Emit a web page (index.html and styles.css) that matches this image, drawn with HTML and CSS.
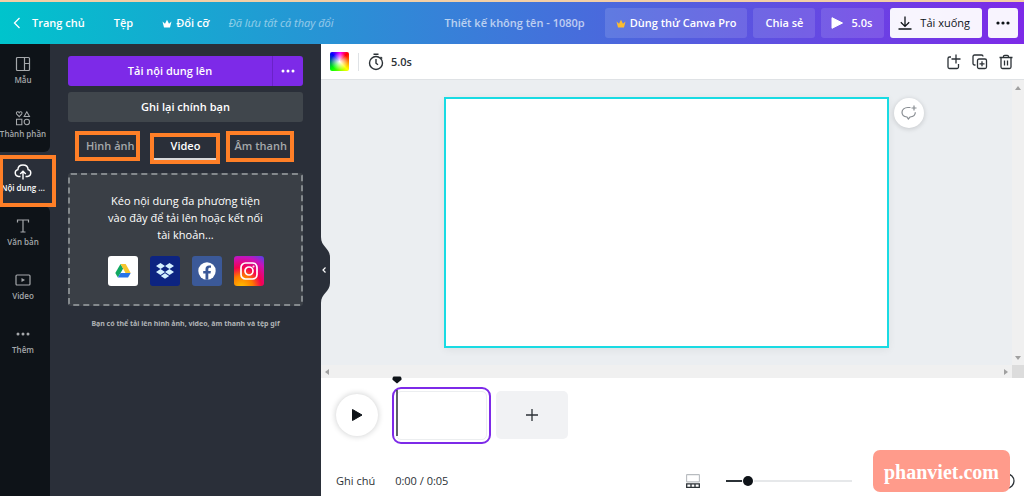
FILE: index.html
```html
<!DOCTYPE html>
<html lang="vi">
<head>
<meta charset="utf-8">
<meta name="viewport" content="width=device-width, initial-scale=1">
<title>Thiết kế không tên - 1080p</title>
<link rel="stylesheet" href="styles.css">
</head>
<body>
<header class="topbar">
  <nav class="topnav">
    <a class="home" href="#"><svg width="8" height="12" viewBox="0 0 8 12"><path d="M6.500 1 1.500 6l5 5" fill="none" stroke="currentColor" stroke-width="1.300"/></svg>Trang chủ</a>
    <button class="navbtn" type="button">Tệp</button>
    <button class="navbtn resize" type="button"><svg width="10" height="9" viewBox="0 0 10 9"><path d="M2 8.500 .5 2.500l2.500 2.200L5 .8l2 3.900 2.500-2.200L8 8.500z" fill="currentColor"/></svg>Đổi cỡ</button>
    <span class="saved">Đã lưu tất cả thay đổi</span>
  </nav>
  <div class="actions">
    <span class="title">Thiết kế không tên - 1080p</span>
    <button class="btn pro" type="button"><svg class="gold" width="10" height="9" viewBox="0 0 10 9"><path d="M2 8.500 .5 2.500l2.500 2.200L5 .8l2 3.900 2.500-2.200L8 8.500z" fill="currentColor"/></svg>Dùng thử Canva Pro</button>
    <button class="btn" type="button">Chia sẻ</button>
    <button class="btn preview" type="button"><svg width="12" height="12" viewBox="0 0 12 12"><path d="M1 .7v10.600L11.500 6z" fill="currentColor" stroke="currentColor" stroke-linejoin="round"/></svg>5.0s</button>
    <button class="btn light download" type="button"><svg width="14" height="14" viewBox="0 0 14 14" fill="none" stroke="currentColor" stroke-width="1.300"><path d="M7 .5V10M2.800 6.200 7 10.400l4.200-4.200M.5 13h13"/></svg>Tải xuống</button>
    <button class="btn light more" type="button" aria-label="Thêm tùy chọn"><svg width="14" height="4" viewBox="0 0 14 4" fill="currentColor"><circle cx="2" cy="2" r="1.600"/><circle cx="7" cy="2" r="1.600"/><circle cx="12" cy="2" r="1.600"/></svg></button>
  </div>
</header>
<div class="workspace">
  <nav class="rail">
    <div class="group top">
      <a class="tab" href="#"><svg width="16" height="16" viewBox="0 0 16 16" fill="none" stroke="currentColor" stroke-width="1.200"><rect x="1.500" y="1.500" width="13" height="13" rx="1"/><path d="M9.500 1.500v13M9.500 7.500h5"/></svg>Mẫu</a>
      <a class="tab" href="#"><svg width="18" height="18" viewBox="0 0 18 18" fill="none" stroke="currentColor" stroke-width="1.200"><path d="M4.700 7.500 2 4.600C.5 2.500 3.400.7 4.700 3 6 .7 9 2.500 7.400 4.600zM13.300 2l3 5.400h-6zM1.700 10.500h6v6h-6z"/><circle cx="13.300" cy="13.500" r="3"/></svg>Thành phần</a>
    </div>
    <a class="tab active" href="#" aria-current="page"><svg width="18" height="16" viewBox="0 0 18 16" fill="none" stroke="currentColor" stroke-width="1.400"><path d="M6.500 12.500H4.500A3.500 3.500 0 0 1 3.900 5.600C4 2.800 6.200 1 9 1s5 1.800 5.100 4.600a3.500 3.500 0 0 1-.6 6.900h-2M9 15.500v-8M6.200 10 9 7.200l2.800 2.800"/></svg>Nội dung ...</a>
    <div class="group rest">
      <a class="tab" href="#"><svg width="14" height="16" viewBox="0 0 14 16" fill="none" stroke="currentColor" stroke-width="1.200"><path d="M1.500 4.500V2h11v2.500M7 2v12M4.500 14h5"/></svg>Văn bản</a>
      <a class="tab" href="#"><svg width="16" height="16" viewBox="0 0 16 16" fill="none" stroke="currentColor" stroke-width="1.200"><rect x="1" y="3" width="14" height="10" rx="1"/><path d="M6.500 6v4L10 8z" fill="currentColor" stroke="none"/></svg>Video</a>
      <a class="tab" href="#"><svg width="16" height="16" viewBox="0 0 16 16" fill="currentColor"><circle cx="3" cy="8" r="1.500"/><circle cx="8" cy="8" r="1.500"/><circle cx="13" cy="8" r="1.500"/></svg>Thêm</a>
    </div>
    <span class="mark mark-rail"></span>
  </nav>
  <aside class="panel">
    <div class="upload">
      <button class="upload-main" type="button">Tải nội dung lên</button>
      <button class="upload-more" type="button" aria-label="Tùy chọn tải lên"><svg width="14" height="4" viewBox="0 0 14 4" fill="currentColor"><circle cx="2" cy="2" r="1.500"/><circle cx="7" cy="2" r="1.500"/><circle cx="12" cy="2" r="1.500"/></svg></button>
    </div>
    <button class="record" type="button">Ghi lại chính bạn</button>
    <div class="kinds">
      <button class="kind" type="button">Hình ảnh<span class="mark mark-image"></span></button>
      <button class="kind selected" type="button">Video<span class="mark mark-video"></span></button>
      <button class="kind" type="button">Âm thanh<span class="mark mark-audio"></span></button>
    </div>
    <section class="drop">
      <p class="drop-text">Kéo nội dung đa phương tiện vào đây để tải lên hoặc kết nối tài khoản...</p>
      <div class="services">
        <button class="service drive" type="button" aria-label="Google Drive"><svg width="16" height="14" viewBox="0 0 16 14"><path d="M5.500 0 .3 9l2.600 4.500L8.200 4.600z" fill="#11a861"/><path d="M5.500 0h5.200l5 9h-5.200z" fill="#f7c52d"/><path d="M2.900 13.500 5.500 9h10.200l-2.600 4.500z" fill="#2874e8"/></svg></button>
        <button class="service dropbox" type="button" aria-label="Dropbox"><svg width="20" height="18" viewBox="0 0 20 18" fill="#d5f1ff"><path d="m5.500 1 4.500 3-4.500 3L1 4zM14.500 1 19 4l-4.500 3L10 4zM5.500 7l4.500 3-4.500 3L1 10zM14.500 7l4.500 3-4.500 3-4.500-3zM10 11.200l4.200 2.800-4.200 2.800L5.800 14z"/></svg></button>
        <button class="service facebook" type="button" aria-label="Facebook"><svg width="18" height="18" viewBox="0 0 18 18"><circle cx="9" cy="9" r="8.700" fill="#fff"/><path d="M7.500 17.700v-6.200H5.200V9h2.300V7c0-2.300 1.400-3.600 3.500-3.600l2 .2v2.200h-1.200c-1.100 0-1.500.7-1.500 1.400V9h2.600l-.4 2.500h-2.200v6.200z" fill="#3b5998"/></svg></button>
        <button class="service instagram" type="button" aria-label="Instagram"><svg width="18" height="18" viewBox="0 0 18 18" fill="none" stroke="#fff" stroke-width="1.700"><rect x="1" y="1" width="16" height="16" rx="4.500"/><circle cx="9" cy="9" r="4"/><circle cx="13.500" cy="4.500" r=".4" stroke-width="1.200"/></svg></button>
      </div>
    </section>
    <p class="hint">Bạn có thể tải lên hình ảnh, video, âm thanh và tệp gif</p>
    <button class="collapse" type="button" aria-label="Ẩn bảng"><svg width="10" height="66" viewBox="0 0 10 66"><path d="M0 0c0 10 9 11 9 20v26c0 9-9 10-9 20z" fill="#2a2f39"/><path d="M4.500 30.500 2 33l2.500 2.500" fill="none" stroke="#fff" stroke-width="1.200"/></svg></button>
  </aside>
  <main class="editor">
    <div class="toolbar">
      <button class="swatch" type="button" aria-label="Màu nền"></button>
      <span class="divider"></span>
      <button class="timing" type="button"><svg width="16" height="18" viewBox="0 0 16 18" fill="none" stroke="currentColor" stroke-width="1.400"><circle cx="8" cy="10" r="6.500"/><path d="M5.500 1.200h5M8 6v4.200l2 1.600M12.500 4l1.700 1.500"/></svg>5.0s</button>
      <div class="page-tools">
        <button class="tool" type="button" aria-label="Thêm trang"><svg width="16" height="16" viewBox="0 0 16 16" fill="none" stroke="currentColor" stroke-width="1.300"><path d="M5 3H3.500A1.500 1.500 0 0 0 2 4.500V13a1.500 1.500 0 0 0 1.500 1.500H11a1.500 1.500 0 0 0 1.500-1.500v-3M10 .5v9M5.500 5h9"/></svg></button>
        <button class="tool" type="button" aria-label="Nhân đôi trang"><svg width="16" height="16" viewBox="0 0 16 16" fill="none" stroke="currentColor" stroke-width="1.300"><path d="M3.500 11H2.500A1.500 1.500 0 0 1 1 9.500v-7A1.500 1.500 0 0 1 2.500 1h7A1.500 1.500 0 0 1 11 2.500"/><rect x="5.500" y="5" width="9" height="9.500" rx="1.500"/><path d="M10 7.300v5M7.500 9.800h5"/></svg></button>
        <button class="tool" type="button" aria-label="Xóa trang"><svg width="16" height="16" viewBox="0 0 16 16" fill="none" stroke="currentColor" stroke-width="1.300"><path d="M1.500 3.500h13M5.500 3.500V2.500A1.200 1.200 0 0 1 6.700 1.300h2.600a1.200 1.200 0 0 1 1.200 1.200v1M3 3.500V13a1.500 1.500 0 0 0 1.500 1.500h7A1.500 1.500 0 0 0 13 13V3.500M6.500 6.500v5M9.500 6.500v5"/></svg></button>
      </div>
    </div>
    <div class="stage">
      <div class="canvas">
        <div class="page">
          <button class="comment" type="button" aria-label="Thêm nhận xét"><svg width="16" height="16" viewBox="0 0 16 16" fill="none" stroke="currentColor" stroke-width="1.200"><path d="M9.500 2.500H6.800C3.500 2.500 1 4.600 1 7.300s2 4.500 5 4.700l1.300 2 1.700-2c3.500-.2 5.300-2.200 5.300-4.700M13 .5v5M10.500 3h5"/></svg></button>
        </div>
      </div>
      <div class="vscroll"><svg width="6" height="4" viewBox="0 0 6 4"><path d="m3 0 3 4H0z" fill="#a0a0a0"/></svg><svg width="6" height="4" viewBox="0 0 6 4"><path d="M0 0h6L3 4z" fill="#a0a0a0"/></svg></div>
      <div class="hscroll"><svg width="4" height="6" viewBox="0 0 4 6"><path d="M4 0v6L0 3z" fill="#a0a0a0"/></svg><svg width="4" height="6" viewBox="0 0 4 6"><path d="m0 0 4 3-4 3z" fill="#a0a0a0"/></svg></div>
      <div class="corner"></div>
    </div>
    <footer class="timeline">
      <div class="clips">
        <button class="play" type="button" aria-label="Phát"><svg width="12" height="14" viewBox="0 0 12 14"><path d="M1.500 1.500v11L11 7z" fill="#0e1318" stroke="#0e1318" stroke-linejoin="round"/></svg></button>
        <div class="clip-frame"><div class="clip-page"></div>
          <svg class="playhead" width="10" height="60" viewBox="0 0 10 60"><path d="M1.500.5h7L9.500 2v1.800L5 7.500.5 3.800V2z" fill="#0e1318"/><path d="M5 14v46" stroke="#2b3136" stroke-width="1.500"/></svg>
        </div>
        <button class="add" type="button" aria-label="Thêm cảnh"><svg width="12" height="12" viewBox="0 0 12 12"><path d="M6 0v12M0 6h12" stroke="#2b3136" stroke-width="1.300"/></svg></button>
      </div>
      <div class="status">
        <button class="notes" type="button">Ghi chú</button>
        <span class="time">0:00 / 0:05</span>
        <div class="view">
          <button class="tool" type="button" aria-label="Chế độ xem"><svg width="14" height="14" viewBox="0 0 14 14" fill="none"><rect x=".6" y=".6" width="12.800" height="7.300" rx=".5" stroke="#b8bcc0" stroke-width="1.100"/><path d="M.7 9.800h12.600v3.500H.7zM5 9.800v3.500M9 9.800v3.500" stroke="#2b3136" stroke-width="1.300"/></svg></button>
          <input class="zoom" type="range" min="0" max="100" value="15" aria-label="Thu phóng">
          <button class="help" type="button" aria-label="Trợ giúp"><svg width="16" height="16" viewBox="0 0 16 16"><circle cx="8" cy="8" r="7" fill="none" stroke="#2b3136" stroke-width="1.300"/></svg></button>
        </div>
      </div>
    </footer>
    <a class="watermark" href="#">phanviet.com</a>
  </main>
</div>
</body>
</html>
```
FILE: styles.css
```css
* { box-sizing: border-box; }
body {
  margin: 0;
  min-height: 100vh;
  display: flex;
  flex-direction: column;
  overflow: hidden;
  font: 600 11px/16px "Open Sans", "Noto Sans", sans-serif;
  color: #2b3136;
  background: #fff;
}
button { border: 0; margin: 0; padding: 0; background: none; font: inherit; color: inherit; cursor: pointer; }
a { color: inherit; text-decoration: none; }
p { margin: 0; }
svg { display: block; flex: none; }

.topbar {
  display: flex;
  align-items: center;
  justify-content: space-between;
  height: 44px;
  padding: 0 6px 0 13px;
  border-top: 2px solid #f3cfa6;
  color: #fff;
  background: linear-gradient(90deg, #00c4cc, #7d2ae8);
}
.topnav, .actions { display: flex; align-items: center; white-space: nowrap; }
.home { display: flex; align-items: center; gap: 11px; }
.navbtn { margin-left: 29px; }
.resize { display: flex; align-items: center; gap: 4px; }
.saved { margin-left: 19px; font-weight: 400; font-style: italic; opacity: .5; }
.actions { gap: 6px; }
.title { margin-right: 14px; opacity: .65; }
.btn {
  display: flex;
  align-items: center;
  justify-content: center;
  height: 30px;
  padding: 0 12px;
  border-radius: 3px;
  background: rgba(255, 255, 255, .12);
}
.pro { gap: 4px; padding: 0 11px; }
.gold { color: #fdbc2e; }
.preview { gap: 8px; padding: 0 12px 0 10px; }
.light { color: #0e1318; background: rgba(255, 255, 255, .95); }
.download { gap: 8px; font-weight: 400; padding: 0 12px 0 8px; }
.more { width: 30px; padding: 0; }

.workspace { flex: 1; display: flex; }
.rail {
  position: relative;
  z-index: 2;
  width: 50px;
  display: flex;
  flex-direction: column;
  background: #2a2f39;
  color: #a5a8ab;
  font-size: 8px;
  line-height: 12px;
}
.group { background: #0e1318; }
.top { border-bottom-right-radius: 6px; }
.rest { flex: 1; border-top-right-radius: 6px; }
.tab {
  display: flex;
  flex-direction: column;
  align-items: center;
  justify-content: space-between;
  height: 54px;
  padding: 12px 4px 12px 0;
  white-space: nowrap;
}
.tab svg { height: 16px; }
.active { color: #fff; }

.mark { position: absolute; border: 4px solid #ff7f27; pointer-events: none; }
.mark-rail { left: -1px; top: 111px; width: 57px; height: 52px; }
.mark-image { inset: -3px 13px -3px 7px; }
.mark-video { inset: -1px -1px -6px -3px; }
.mark-audio { inset: -3px 9px -4px 7px; }

.panel {
  position: relative;
  z-index: 1;
  width: 271px;
  padding: 12px 18px;
  color: #fff;
  background: #2a2f39;
}
.upload { display: flex; height: 30px; border-radius: 3px; overflow: hidden; background: #7d2ae8; }
.upload-main { flex: 1; }
.upload-more { display: flex; align-items: center; justify-content: center; width: 31px; border-left: 1px solid #6a22c8; }
.record { display: block; width: 100%; height: 30px; margin-top: 6px; border-radius: 3px; background: #40464c; }
.kinds { display: grid; grid-template-columns: 1fr 66px 1fr; height: 26px; margin-top: 12px; }
.kind { position: relative; color: #a5a8ab; border-bottom: 2px solid transparent; }
.selected { color: #fff; border-bottom-color: #d8d9db; }
.drop {
  display: flex;
  flex-direction: column;
  align-items: center;
  gap: 13px;
  margin-top: 13px;
  padding: 17px 36px 18px;
  border: 2px dashed #84898d;
  border-radius: 3px;
  background: #3a3f46;
}
.drop-text { line-height: 17px; font-weight: 400; text-align: center; }
.services { display: flex; gap: 12px; }
.service { display: flex; align-items: center; justify-content: center; width: 30px; height: 30px; border-radius: 3px; }
.drive { background: #fff; }
.dropbox { background: #0d2481; }
.facebook { background: #3b5998; }
.instagram { background: radial-gradient(circle at 25% 105%, #ffc400 0, #ff7a00 30%, #f5004f 52%, #c913b9 78%, #4a45ee 100%); }
.hint { margin-top: 11px; color: #b0b3b6; font: 700 7px/14px "Noto Sans", "Open Sans", sans-serif; text-align: center; white-space: nowrap; }
.collapse { position: absolute; left: 100%; top: 193px; }

.editor { position: relative; flex: 1; min-width: 0; display: flex; flex-direction: column; }
.toolbar { display: flex; align-items: center; height: 36px; padding: 0 10px 0 9px; border-bottom: 1px solid #dfe2e5; }
.swatch {
  width: 19px;
  height: 19px;
  border-radius: 2px;
  background: radial-gradient(circle, #fff, rgba(255, 255, 255, 0) 65%), conic-gradient(from 45deg, red, #ff0 90deg, #0f0 180deg, #00f 270deg, #f0f 320deg, red);
}
.divider { width: 1px; height: 18px; margin: 0 9px; background: #dfe2e5; }
.timing { display: flex; align-items: center; gap: 7px; }
.page-tools { display: flex; gap: 10px; margin-left: auto; }

.stage { flex: 1; display: grid; grid-template: 1fr 13px / 1fr 12px; }
.canvas { display: flex; justify-content: center; align-items: flex-start; padding: 17px 0; background: #ebeef1; }
.page { position: relative; width: 64.4%; aspect-ratio: 445 / 251; border: 2px solid #19dbe3; background: #fff; box-shadow: 0 2px 8px rgba(14, 19, 24, .06); }
.comment {
  position: absolute;
  top: -1px;
  left: calc(100% + 7px);
  display: flex;
  align-items: center;
  justify-content: center;
  width: 30px;
  height: 30px;
  border-radius: 50%;
  color: #888d92;
  background: #fff;
  box-shadow: 0 1px 5px rgba(14, 19, 24, .18);
}
.vscroll, .hscroll { display: flex; align-items: center; justify-content: space-between; background: #f0f0f0; }
.vscroll { flex-direction: column; padding: 6px 0 5px; }
.hscroll { padding: 0 4px; }
.corner { background: #dcdcdc; }

.timeline { padding: 8px 9px 7px 15px; background: #fff; }
.clips { display: flex; align-items: center; height: 58px; }
.play { display: flex; align-items: center; justify-content: center; width: 42px; height: 42px; border-radius: 50%; box-shadow: 0 0 6px rgba(14, 19, 24, .22); }
.clip-frame { position: relative; width: 99px; height: 57px; margin-left: 14px; padding: 2px; border: 2px solid #7d2ae8; border-radius: 9px; }
.clip-page { height: 100%; border: 1px solid #eceef0; border-radius: 5px; }
.playhead { position: absolute; left: -2px; top: -13px; }
.add { display: flex; align-items: center; justify-content: center; width: 72px; height: 48px; margin-left: 5px; border-radius: 5px; background: #f1f2f4; }
.status { display: flex; align-items: center; margin-top: 29px; font-weight: 400; }
.time { margin-left: 20px; }
.view { display: flex; align-items: center; margin-left: auto; }
.zoom { appearance: none; width: 126px; height: 16px; margin: 0 147px 0 26px; background: linear-gradient(90deg, #2b3136 16%, #e6e8ea 16%) center / 100% 2px no-repeat; }
.zoom::-webkit-slider-thumb { appearance: none; width: 10px; height: 10px; border-radius: 50%; background: #0e1318; box-shadow: 0 0 0 1px #fff; }
.watermark {
  position: absolute;
  right: 14px;
  bottom: 4px;
  padding: 11px 11px 9px;
  border-radius: 7px;
  color: #fff;
  background: #ff9b8b;
  font: bold 20px/22px "Liberation Serif", serif;
}
```
